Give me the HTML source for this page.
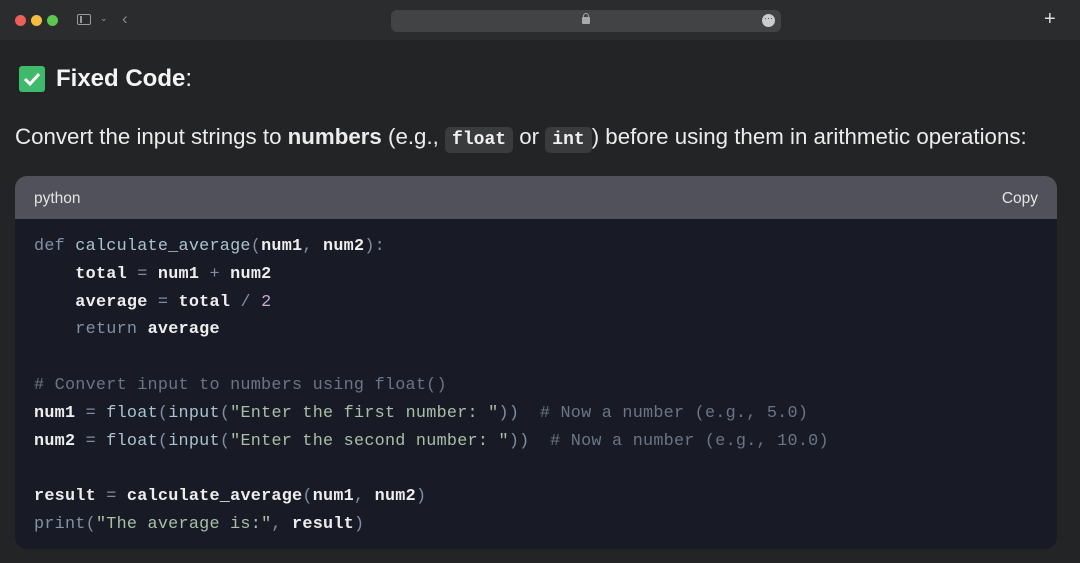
<!DOCTYPE html>
<html><head><meta charset="utf-8"><style>
*{margin:0;padding:0;box-sizing:border-box}
body{width:1080px;height:563px;background:#232425;font-family:"Liberation Sans",sans-serif;color:#ececec;position:relative;overflow:hidden}
.tb{position:absolute;left:0;top:0;width:1080px;height:40px;background:#2b2c2e}
.dot{position:absolute;top:15px;width:11px;height:11px;border-radius:50%}
.url{position:absolute;left:391px;top:10px;width:390px;height:22px;border-radius:6px;background:#424345}
h1{position:absolute;left:19px;top:65px;font-size:24px;font-weight:bold;color:#f4f4f4;display:flex;align-items:center}
.chk{width:26px;height:26px;background:#3fb96a;border-radius:3px;margin-right:11px;display:inline-flex;align-items:center;justify-content:center}
p{position:absolute;left:15px;top:124px;font-size:22.3px;color:#ececec;white-space:nowrap;letter-spacing:0}
code.i{font-family:"Liberation Mono",monospace;font-weight:bold;font-size:18px;background:#3a3b3d;border-radius:5px;padding:3px 7px;color:#f0f0f0;letter-spacing:0}
.card{position:absolute;left:15px;top:176px;width:1042px;height:373px;border-radius:12px;overflow:hidden;background:#181b25}
.hd{height:43px;background:#50515a;display:flex;justify-content:space-between;align-items:center;padding:3px 19px 0;font-size:15.5px;color:#e4e4e4}
pre{font-family:"Liberation Mono",monospace;font-size:16.8px;line-height:27.8px;padding:14px 19px;color:#aab3c4;letter-spacing:0.25px}
.w{color:#eeeeee;font-weight:bold}.k{color:#8091a8}.f{color:#a8c4cf}.s{color:#a9bfa6}.c{color:#6b7585}.n{color:#c9a9d6}.p{color:#7f8ea3}
</style></head><body>
<div class="tb">
<div class="dot" style="left:15px;background:#ed5f58"></div>
<div class="dot" style="left:31px;background:#f5bd3f"></div>
<div class="dot" style="left:47px;background:#5bc84b"></div>
<div style="position:absolute;left:77px;top:14px;width:14px;height:11px;border:1.5px solid #999;border-radius:2px"></div>
<div style="position:absolute;left:80px;top:16px;width:1.5px;height:7px;background:#999"></div>
<div style="position:absolute;left:100px;top:13px;color:#999;font-size:9px">⌄</div>
<div style="position:absolute;left:122px;top:9px;color:#888;font-size:17px">‹</div>
<div class="url"></div>
<div style="position:absolute;left:582px;top:17px;width:8px;height:7px;background:#aaa;border-radius:1px"></div>
<div style="position:absolute;left:583px;top:13px;width:6px;height:6px;border:1.5px solid #aaa;border-radius:3px 3px 0 0"></div>
<div style="position:absolute;left:762px;top:14px;width:13px;height:13px;background:#ccc;border-radius:50%;color:#444;font-size:9px;line-height:8px;text-align:center">···</div>
<div style="position:absolute;left:1044px;top:8px;color:#ddd;font-size:20px">+</div>
</div>
<h1><span class="chk"><svg width="18" height="14" viewBox="0 0 18 14"><path d="M2 7l5 5 9-10" stroke="#fff" stroke-width="3" fill="none"/></svg></span>Fixed Code<span style="font-weight:normal">:</span></h1>
<p>Convert the input strings to <b>numbers</b> (e.g., <code class="i">float</code> or <code class="i">int</code>) before using them in arithmetic operations:</p>
<div class="card">
<div class="hd"><span>python</span><span>Copy</span></div>
<pre><span class="k">def</span> <span class="f">calculate_average</span><span class="p">(</span><span class="w">num1</span><span class="p">,</span> <span class="w">num2</span><span class="p">):</span>
    <span class="w">total</span> <span class="p">=</span> <span class="w">num1</span> <span class="p">+</span> <span class="w">num2</span>
    <span class="w">average</span> <span class="p">=</span> <span class="w">total</span> <span class="p">/</span> <span class="n">2</span>
    <span class="k">return</span> <span class="w">average</span>

<span class="c"># Convert input to numbers using float()</span>
<span class="w">num1</span> <span class="p">=</span> <span class="f">float</span><span class="p">(</span><span class="f">input</span><span class="p">(</span><span class="s">"Enter the first number: "</span><span class="p">))</span>  <span class="c"># Now a number (e.g., 5.0)</span>
<span class="w">num2</span> <span class="p">=</span> <span class="f">float</span><span class="p">(</span><span class="f">input</span><span class="p">(</span><span class="s">"Enter the second number: "</span><span class="p">))</span>  <span class="c"># Now a number (e.g., 10.0)</span>

<span class="w">result</span> <span class="p">=</span> <span class="w">calculate_average</span><span class="p">(</span><span class="w">num1</span><span class="p">,</span> <span class="w">num2</span><span class="p">)</span>
<span class="k">print</span><span class="p">(</span><span class="s">"The average is:"</span><span class="p">,</span> <span class="w">result</span><span class="p">)</span></pre>
</div>
</body></html>
